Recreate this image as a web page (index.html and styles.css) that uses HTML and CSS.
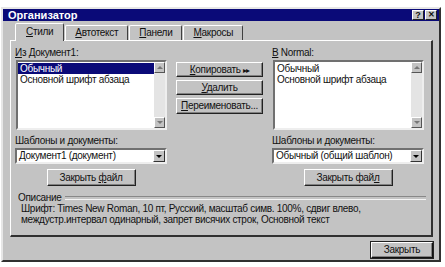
FILE: index.html
```html
<!DOCTYPE html>
<html lang="ru">
<head>
    <meta charset="UTF-8">
    <title>Организатор</title>
    <link rel="stylesheet" href="styles.css">
</head>
<body>
    <div class="dialog">
        <div class="titlebar">
            <span class="title">Организатор</span>
            <div class="title-buttons">
                <span class="tbtn">?</span>
                <span class="tbtn tbtn-close">✕</span>
            </div>
        </div>

        <div class="content">
            <!-- вкладки -->
            <div class="tabs">
                <div class="tab active"><u>С</u>тили</div>
                <div class="tab"><u>А</u>втотекст</div>
                <div class="tab"><u>П</u>анели</div>
                <div class="tab"><u>М</u>акросы</div>
            </div>

            <div class="panel">
                <div class="columns">
                    <div class="col">
                        <div class="label"><u>И</u>з Документ1:</div>
                        <div class="listbox">
                            <div class="items">
                                <div class="item selected">Обычный</div>
                                <div class="item">Основной шрифт абзаца</div>
                            </div>
                            <div class="scrollbar">
                                <span class="arrow up"></span>
                                <span class="track"></span>
                                <span class="arrow down"></span>
                            </div>
                        </div>
                        <div class="label label-templates">Шаблоны и <u>д</u>окументы:</div>
                        <div class="combo">
                            <span class="combo-value">Документ1 (документ)</span>
                            <span class="combo-btn"><span class="tri"></span></span>
                        </div>
                        <div class="btn btn-file">Закрыть <u>ф</u>айл</div>
                    </div>

                    <div class="actions">
                        <div class="btn"><u>К</u>опировать <span class="dbl">▸▸</span></div>
                        <div class="btn"><u>У</u>далить</div>
                        <div class="btn btn-tall"><u>П</u>ереименовать...</div>
                    </div>

                    <div class="col">
                        <div class="label"><u>В</u> Normal:</div>
                        <div class="listbox">
                            <div class="items">
                                <div class="item">Обычный</div>
                                <div class="item">Основной шрифт абзаца</div>
                            </div>
                            <div class="scrollbar">
                                <span class="arrow up"></span>
                                <span class="track"></span>
                                <span class="arrow down"></span>
                            </div>
                        </div>
                        <div class="label label-templates">Шаблоны и <u>д</u>окументы:</div>
                        <div class="combo">
                            <span class="combo-value">Обычный (общий шаблон)</span>
                            <span class="combo-btn"><span class="tri"></span></span>
                        </div>
                        <div class="btn btn-file">Закрыть фай<u>л</u></div>
                    </div>
                </div>

                <!-- описание стиля -->
                <div class="groupbox">
                    <div class="legend"><span>Описание</span></div>
                    <div class="description">
                        Шрифт: Times New Roman, 10 пт, Русский, масштаб симв. 100%, сдвиг влево,<br>
                        междустр.интервал одинарный, запрет висячих строк, Основной текст
                    </div>
                </div>
            </div>

            <div class="footer">
                <div class="btn btn-close">Закрыть</div>
            </div>
        </div>
    </div>
</body>
</html>
```

FILE: styles.css
```css
* {
    box-sizing: border-box;
}

body {
    margin: 0;
    background: #fff;
    font-family: "Liberation Sans", Arial, sans-serif;
    font-size: 10px;
    letter-spacing: -0.3px;
    color: #111;
}

u {
    text-decoration: underline;
    text-underline-offset: 1px;
}

.dialog {
    margin: 7px 0 0 1px;
    width: 440px;
    height: 255px;
    background: #c3c3c3;
    border: 2px solid;
    border-color: #e6e6e6 #303030 #303030 #e6e6e6;
    display: flex;
    flex-direction: column;
}

.titlebar {
    height: 12px;
    background: #0a0a78;
    display: flex;
    align-items: center;
    justify-content: space-between;
    padding: 0 2px 0 5px;
}

.title {
    color: #fff;
    font-weight: bold;
    font-size: 11px;
    letter-spacing: 0;
}

.title-buttons {
    display: flex;
    gap: 1px;
}

.tbtn {
    width: 12px;
    height: 10px;
    background: #c3c3c3;
    border: 1px solid;
    border-color: #fff #222 #222 #fff;
    font-size: 9px;
    font-weight: bold;
    line-height: 8px;
    letter-spacing: 0;
    text-align: center;
}

.tbtn-close {
    font-size: 8px;
}

.content {
    flex: 1;
    padding: 3px 6px 0 7px;
    display: flex;
    flex-direction: column;
}

.tabs {
    display: flex;
    align-items: flex-end;
    height: 16px;
    padding-left: 7px;
    position: relative;
    z-index: 1;
}

.tab {
    height: 15px;
    padding: 0 9px;
    margin-right: 1px;
    border: 1px solid;
    border-bottom: none;
    border-color: #fff #404040 transparent #fff;
    border-radius: 2px 2px 0 0;
    line-height: 14px;
}

.tab.active {
    height: 18px;
    margin-bottom: -1px;
    margin-left: -2px;
    padding: 0 10px;
    background: #c3c3c3;
    line-height: 16px;
}

.panel {
    height: 197px;
    border: 1px solid;
    border-color: #fff #303030 #303030 #fff;
    border-right-width: 2px;
    border-bottom-width: 2px;
    padding: 5px 7px 0 4px;
}

.columns {
    display: grid;
    grid-template-columns: 152px 87px 152px;
    column-gap: 9px;
}

.label {
    height: 13px;
    line-height: 13px;
    margin-bottom: 1px;
    white-space: nowrap;
}

.label-templates {
    margin-top: 4px;
}

.listbox {
    margin-left: 1px;
    height: 70px;
    background: #fff;
    border: 2px solid;
    border-color: #707070 #eee #eee #707070;
    display: flex;
}

.items {
    flex: 1;
    padding-top: 1px;
}

.item {
    height: 11px;
    line-height: 11px;
    padding-left: 2px;
}

.item.selected {
    background: #0a0a78;
    color: #fff;
}

.scrollbar {
    width: 11px;
    display: flex;
    flex-direction: column;
}

.arrow {
    height: 11px;
    background: #c3c3c3;
    border: 1px solid;
    border-color: #fff #555 #555 #fff;
    position: relative;
}

.arrow::after {
    content: "";
    position: absolute;
    left: 2px;
    top: 3px;
    border-left: 3px solid transparent;
    border-right: 3px solid transparent;
}

.arrow.up::after {
    border-bottom: 3px solid #777;
}

.arrow.down::after {
    border-top: 3px solid #777;
}

.track {
    flex: 1;
    background: #e4e4e4;
}

.combo {
    height: 16px;
    background: #fff;
    border: 2px solid;
    border-color: #707070 #eee #eee #707070;
    display: flex;
    align-items: center;
}

.combo-value {
    flex: 1;
    padding-left: 2px;
    line-height: 12px;
    white-space: nowrap;
    overflow: hidden;
}

.combo-btn {
    width: 12px;
    height: 12px;
    background: #c3c3c3;
    border: 1px solid;
    border-color: #fff #333 #333 #fff;
    position: relative;
}

.tri {
    position: absolute;
    left: 2px;
    top: 4px;
    border-left: 3px solid transparent;
    border-right: 3px solid transparent;
    border-top: 3px solid #000;
}

.btn {
    height: 15px;
    background: #c3c3c3;
    border: 1px solid;
    border-color: #fff #222 #222 #fff;
    box-shadow: inset -1px -1px 0 #808080;
    text-align: center;
    line-height: 13px;
    white-space: nowrap;
}

.btn-tall {
    height: 16px;
    line-height: 14px;
}

.actions {
    padding-top: 16px;
    display: flex;
    flex-direction: column;
    gap: 3px;
}

.dbl {
    font-size: 8px;
    letter-spacing: -1px;
}

.btn-file {
    width: 89px;
    height: 17px;
    line-height: 15px;
    margin: 5px auto 0;
}

.groupbox {
    margin-top: 6px;
    margin-left: -2px;
    margin-right: -2px;
}

.legend {
    display: flex;
    align-items: center;
    gap: 3px;
    padding-left: 5px;
    height: 11px;
    line-height: 11px;
}

.legend::after {
    content: "";
    flex: 1;
    height: 2px;
    border-top: 1px solid #888;
    border-bottom: 1px solid #f4f4f4;
}

.description {
    padding: 0 0 0 8px;
    line-height: 11px;
}

.footer {
    display: flex;
    justify-content: flex-end;
    padding: 5px 0 0;
}

.btn-close {
    width: 62px;
    height: 16px;
    line-height: 14px;
    border-color: #fff #111 #111 #fff;
    outline: 1px solid #222;
}
```
